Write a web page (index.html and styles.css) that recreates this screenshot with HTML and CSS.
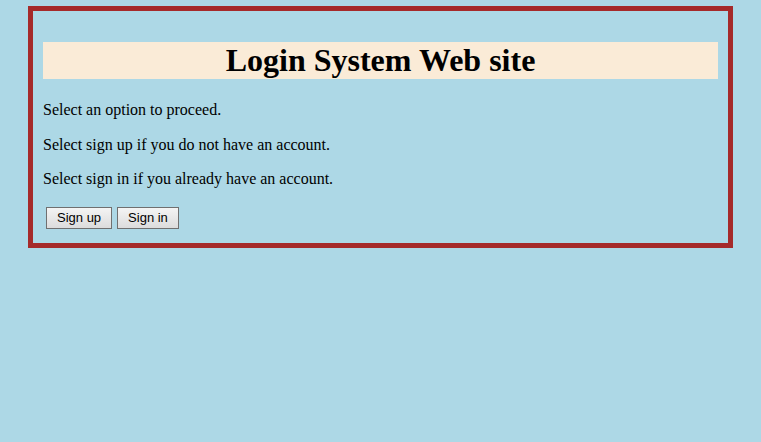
FILE: index.html
```html
<!DOCTYPE html>
<html>
<head>
<meta charset="utf-8">
<title>Login System Web site</title>
<link rel="stylesheet" href="styles.css">
</head>
<body>
<div class="box">
  <h1 class="title">Login System Web site</h1>
  <p class="text">Select an option to proceed.</p>
  <p class="text">Select sign up if you do not have an account.</p>
  <p class="text">Select sign in if you already have an account.</p>
  <div class="actions">
    <button class="btn" type="button">Sign up</button>
    <button class="btn" type="button">Sign in</button>
  </div>
</div>
</body>
</html>
```
FILE: styles.css
```css
html, body {
  margin: 0;
  padding: 0;
  background: #add8e6;
}
body {
  font-family: "Liberation Serif", "Times New Roman", serif;
  font-size: 16px;
  color: #000;
  padding-top: 6px;
}
.box {
  margin: 0 28px;
  border: 5px solid #a52a2a;
  padding: 10px;
}
.title {
  margin: 21px 0;
  background: #faebd7;
  text-align: center;
  font-size: 32px;
  font-weight: bold;
  line-height: 37px;
  height: 37px;
}
.text {
  margin: 16px 0;
  line-height: 18.5px;
  position: relative;
  top: 1px;
}
.actions {
  display: flex;
  gap: 5px;
  margin: 19px 0 4px 3px;
}
.btn {
  font-family: "Liberation Sans", Arial, sans-serif;
  font-size: 13px;
  height: 22px;
  padding: 0 10px;
  border: 1px solid #707070;
  border-radius: 0;
  background: linear-gradient(#f4f4f4, #dcdcdc);
  color: #000;
  box-sizing: border-box;
  margin: 0;
}
```
